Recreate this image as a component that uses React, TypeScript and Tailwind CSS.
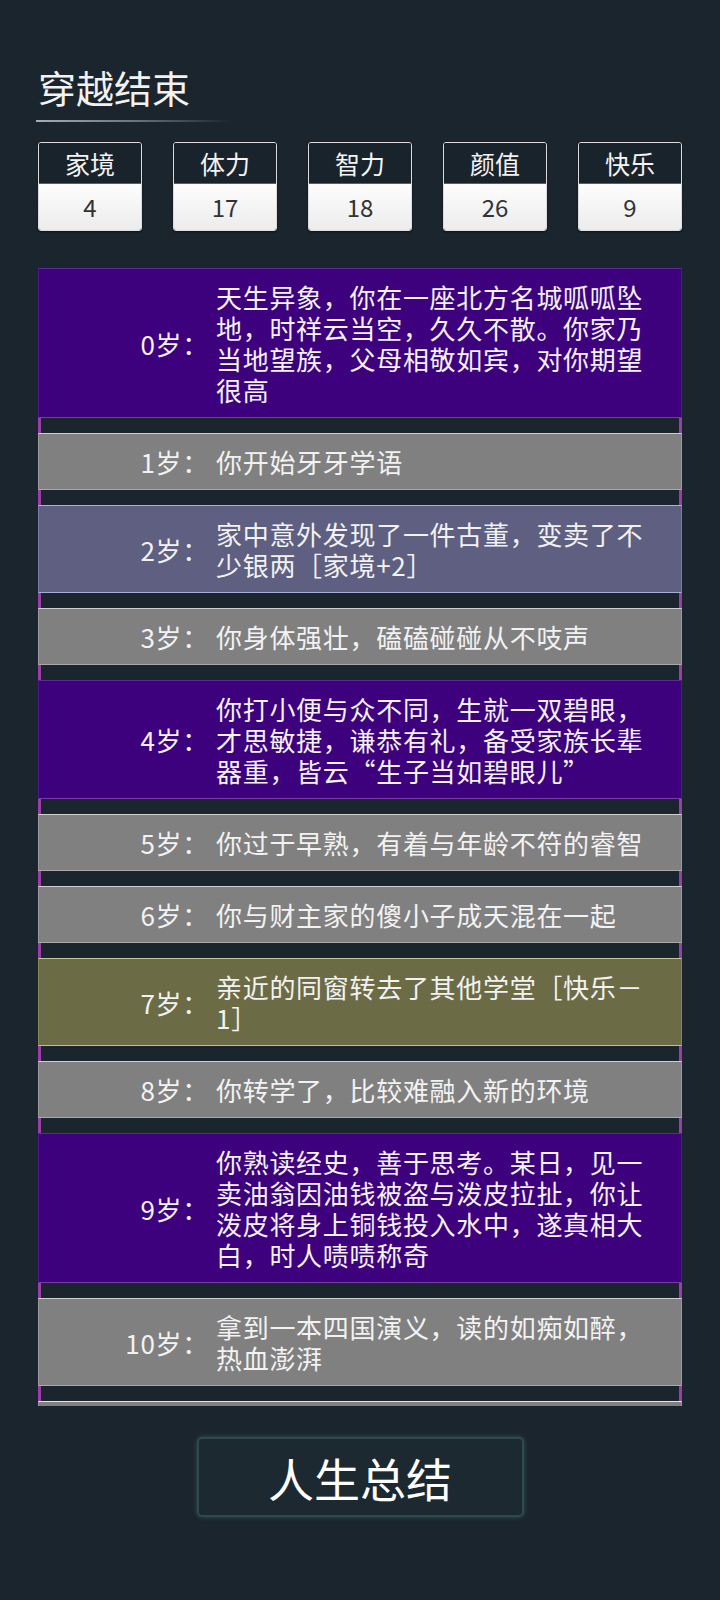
import React from 'react';

type Tone = 'purple' | 'gray' | 'slate' | 'olive';

interface Event {
  age: number;
  text: string;
  tone: Tone;
}

const stats = [
  { label: '家境', value: 4 },
  { label: '体力', value: 17 },
  { label: '智力', value: 18 },
  { label: '颜值', value: 26 },
  { label: '快乐', value: 9 },
];

const events: Event[] = [
  { age: 0, tone: 'purple', text: '天生异象，你在一座北方名城呱呱坠地，时祥云当空，久久不散。你家乃当地望族，父母相敬如宾，对你期望很高' },
  { age: 1, tone: 'gray', text: '你开始牙牙学语' },
  { age: 2, tone: 'slate', text: '家中意外发现了一件古董，变卖了不少银两［家境+2］' },
  { age: 3, tone: 'gray', text: '你身体强壮，磕磕碰碰从不吱声' },
  { age: 4, tone: 'purple', text: '你打小便与众不同，生就一双碧眼，才思敏捷，谦恭有礼，备受家族长辈器重，皆云“生子当如碧眼儿”' },
  { age: 5, tone: 'gray', text: '你过于早熟，有着与年龄不符的睿智' },
  { age: 6, tone: 'gray', text: '你与财主家的傻小子成天混在一起' },
  { age: 7, tone: 'olive', text: '亲近的同窗转去了其他学堂［快乐－1］' },
  { age: 8, tone: 'gray', text: '你转学了，比较难融入新的环境' },
  { age: 9, tone: 'purple', text: '你熟读经史，善于思考。某日，见一卖油翁因油钱被盗与泼皮拉扯，你让泼皮将身上铜钱投入水中，遂真相大白，时人啧啧称奇' },
  { age: 10, tone: 'gray', text: '拿到一本四国演义，读的如痴如醉，热血澎湃' },
];

const toneClass: Record<Tone, string> = {
  purple: 'bg-[#3e017e] border-t-[#5c2a98] border-b-[#7a3aa8] border-x-[#4a1a8a]',
  gray: 'bg-[#808080] border-t-[#cfcfcf] border-b-[#a9a9a9] border-x-[#9a9a9a]',
  slate: 'bg-[#5e5f81] border-t-[#aab2da] border-b-[#a6aed6] border-x-[#7a7ea6]',
  olive: 'bg-[#6b6c46] border-t-[#c2c994] border-b-[#bcc38c] border-x-[#858a5c]',
};

const cjk = { fontFamily: '"Noto Sans CJK SC", "Noto Sans", sans-serif' };

export default function App() {
  return (
    <div className="min-h-[1600px] bg-[#1b252d] text-[#f2f2f2]" style={cjk}>
      <div className="px-[36px] pt-[64px]">
        <h1 className="text-[38px] leading-[46px] font-normal pl-[2px]">穿越结束</h1>
        <div className="mt-[10px] h-[2px] w-[196px] bg-gradient-to-r from-[#a8adb2] via-[#6d747a] to-transparent" />
      </div>

      <div className="mt-[20px] flex gap-[31px] px-[38px]">
        {stats.map((s) => (
          <div
            key={s.label}
            className="w-[104px] overflow-hidden rounded-[3px] border border-[#dcdcdc] shadow-[0_1px_2px_rgba(0,0,0,0.5)]"
          >
            <div className="flex h-[41px] items-center justify-center border-b border-[#5a6066] bg-[#19232c] text-[25px] leading-none text-[#f4f4f4]">
              {s.label}
            </div>
            <div className="flex h-[46px] items-center justify-center bg-gradient-to-b from-[#fdfdfd] to-[#ececec] text-[24px] leading-none text-[#333]">
              {s.value}
            </div>
          </div>
        ))}
      </div>

      <div className="mx-[38px] mt-[37px] h-[1138px] overflow-hidden">
        {events.map((e) => (
          <div key={e.age}>
            <div className={`flex items-center border py-3 ${toneClass[e.tone]}`}>
              <div className="w-[170px] shrink-0 text-right text-[26px] leading-[31px] tracking-[0.7px]">
                {e.age}岁：
              </div>
              <div className="ml-[7px] w-[433px] text-[26px] leading-[31px] tracking-[0.7px]">{e.text}</div>
            </div>
            <div className="h-[15px] border-x-[3px] border-x-[#9c3eaa]" />
          </div>
        ))}
        {/* next row, scrolled out of view */}
        <div className="h-[57px] border border-t-[#e6e6e6] border-x-[#9a9a9a] bg-[#808080]" />
      </div>

      <div className="mt-[31px] flex justify-center">
        <button className="h-[80px] w-[327px] rounded-[5px] border-2 border-[#2e4b4c] bg-[#1c2931] text-[46px] leading-none text-white shadow-[0_0_5px_rgba(90,170,160,0.35)]">
          人生总结
        </button>
      </div>
    </div>
  );
}
